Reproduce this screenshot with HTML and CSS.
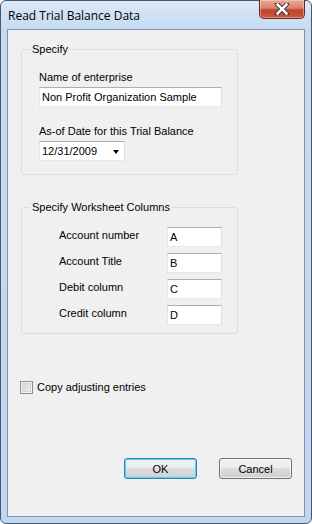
FILE: index.html
```html
<!DOCTYPE html>
<html lang="en">
<head>
    <meta charset="UTF-8">
    <meta name="viewport" content="width=device-width, initial-scale=1.0">
    <title>Read Trial Balance Data</title>
    <link rel="stylesheet" href="styles.css">
</head>
<body>
    <div class="window">
        <div class="titlebar">
            <span class="title">Read Trial Balance Data</span>
            <button class="close" aria-label="Close">
                <svg width="16" height="12" viewBox="0 0 16 12">
                    <path d="M3 1 L13 11 M13 1 L3 11" stroke="#3a3a3a" stroke-width="4.4" stroke-linecap="round" fill="none"/>
                    <path d="M3.6 1.6 L12.4 10.4 M12.4 1.6 L3.6 10.4" stroke="#ffffff" stroke-width="2.6" stroke-linecap="square" fill="none"/>
                </svg>
            </button>
        </div>

        <div class="client">
            <fieldset class="group">
                <legend>Specify</legend>
                <div class="group-body group-body-specify">
                    <label class="field-label">Name of enterprise</label>
                    <input class="textbox textbox-wide" type="text" value="Non Profit Organization Sample">
                    <label class="field-label field-label-gap">As-of Date for this Trial Balance</label>
                    <div class="datepicker">
                        <span>12/31/2009</span>
                        <span class="arrow"></span>
                    </div>
                </div>
            </fieldset>

            <fieldset class="group group-columns">
                <legend>Specify Worksheet Columns</legend>
                <div class="group-body group-body-columns">
                    <div class="col-row">
                        <label>Account number</label>
                        <input class="textbox textbox-short" type="text" value="A">
                    </div>
                    <div class="col-row">
                        <label>Account Title</label>
                        <input class="textbox textbox-short" type="text" value="B">
                    </div>
                    <div class="col-row">
                        <label>Debit column</label>
                        <input class="textbox textbox-short" type="text" value="C">
                    </div>
                    <div class="col-row">
                        <label>Credit column</label>
                        <input class="textbox textbox-short" type="text" value="D">
                    </div>
                </div>
            </fieldset>

            <label class="check">
                <span class="checkbox"></span>
                Copy adjusting entries
            </label>

            <div class="buttons">
                <button class="btn btn-default">OK</button>
                <button class="btn">Cancel</button>
            </div>
        </div>
    </div>
</body>
</html>
```

FILE: styles.css
```css
* {
    box-sizing: border-box;
    margin: 0;
    padding: 0;
}
body {
    font-family: 'Liberation Sans', Arial, sans-serif;
    font-size: 11px;
    line-height: 13px;
    color: #000;
    background-color: #fff;
}
.window {
    width: 312px;
    height: 524px;
    display: flex;
    flex-direction: column;
    padding: 0 6px 6px;
    border: 1px solid #4a5868;
    border-radius: 6px;
    background: linear-gradient(to bottom, #dbe8f7 0, #c5daf2 28px, #c1d7f1 100%);
}
.titlebar {
    height: 28px;
    display: flex;
    justify-content: space-between;
    align-items: flex-start;
}
.title {
    font-family: 'Open Sans', 'Liberation Sans', sans-serif;
    font-size: 12px;
    line-height: 16px;
    margin-top: 7px;
    margin-left: 1px;
    color: #000;
}
.close {
    width: 46px;
    height: 19px;
    margin-top: -1px;
    display: flex;
    align-items: center;
    justify-content: center;
    border: 1px solid #5c2a22;
    border-top: none;
    border-radius: 0 0 5px 5px;
    background: linear-gradient(to bottom, #e9a99a 0, #d9806d 45%, #c1452c 55%, #c8573c 100%);
    box-shadow: inset 0 0 0 1px rgba(255, 220, 210, 0.45);
}
.client {
    flex: 1;
    border: 1px solid #8193aa;
    background-color: #f0f0f0;
}
.group {
    width: 217px;
    margin: 13px 0 0 13px;
    padding: 0;
    border: 1px solid #d5dfe5;
    border-radius: 3px;
}
.group legend {
    margin-left: 8px;
    padding: 0 2px;
    font-size: 11px;
    line-height: 13px;
}
.group-columns {
    margin-top: 26px;
}
.group-body-specify {
    padding: 0 0 13px 17px;
}
.group-body-columns {
    padding: 13px 0 8px 37px;
}
.field-label {
    display: block;
    margin-top: 15px;
}
.field-label-gap {
    margin-top: 18px;
}
.textbox {
    display: block;
    height: 20px;
    padding: 0 2px;
    font-family: inherit;
    font-size: 11px;
    color: #000;
    background-color: #fff;
    border: 1px solid;
    border-color: #abadb3 #dbdfe6 #e3e9ef #e2e3ea;
    outline: none;
}
.textbox-wide {
    width: 183px;
    margin-top: 3px;
}
.textbox-short {
    width: 55px;
}
.datepicker {
    width: 86px;
    height: 20px;
    margin-top: 3px;
    padding: 0 5px 0 2px;
    display: flex;
    align-items: center;
    justify-content: space-between;
    background-color: #fff;
    border: 1px solid;
    border-color: #abadb3 #dbdfe6 #e3e9ef #e2e3ea;
}
.arrow {
    width: 0;
    height: 0;
    margin-top: 1px;
    border-left: 3.5px solid transparent;
    border-right: 3.5px solid transparent;
    border-top: 4px solid #000;
}
.col-row {
    display: flex;
    align-items: center;
    margin-top: 6px;
}
.col-row:first-child {
    margin-top: 0;
}
.col-row label {
    width: 108px;
    margin-top: -3px;
}
.check {
    display: flex;
    align-items: center;
    gap: 4px;
    margin: 47px 0 0 12px;
}
.checkbox {
    width: 13px;
    height: 13px;
    border: 1px solid #8e8f8f;
    background: linear-gradient(135deg, #cbcfd5 0, #f6f6f6 100%);
    box-shadow: inset 0 0 0 1px #f4f4f4, inset 0 0 0 2px #d2d4d8;
}
.buttons {
    display: flex;
    justify-content: flex-end;
    gap: 22px;
    margin-top: 64px;
    padding-right: 12px;
}
.btn {
    width: 73px;
    height: 21px;
    font-family: inherit;
    font-size: 11px;
    color: #000;
    border: 1px solid #707070;
    border-radius: 3px;
    background: linear-gradient(to bottom, #f2f2f2 0, #ebebeb 50%, #dddddd 50%, #cfcfcf 100%);
    box-shadow: inset 0 0 0 1px rgba(255, 255, 255, 0.7);
}
.btn-default {
    border-color: #3c7fb1;
    box-shadow: inset 0 0 0 1px #48d5f9;
}
```
